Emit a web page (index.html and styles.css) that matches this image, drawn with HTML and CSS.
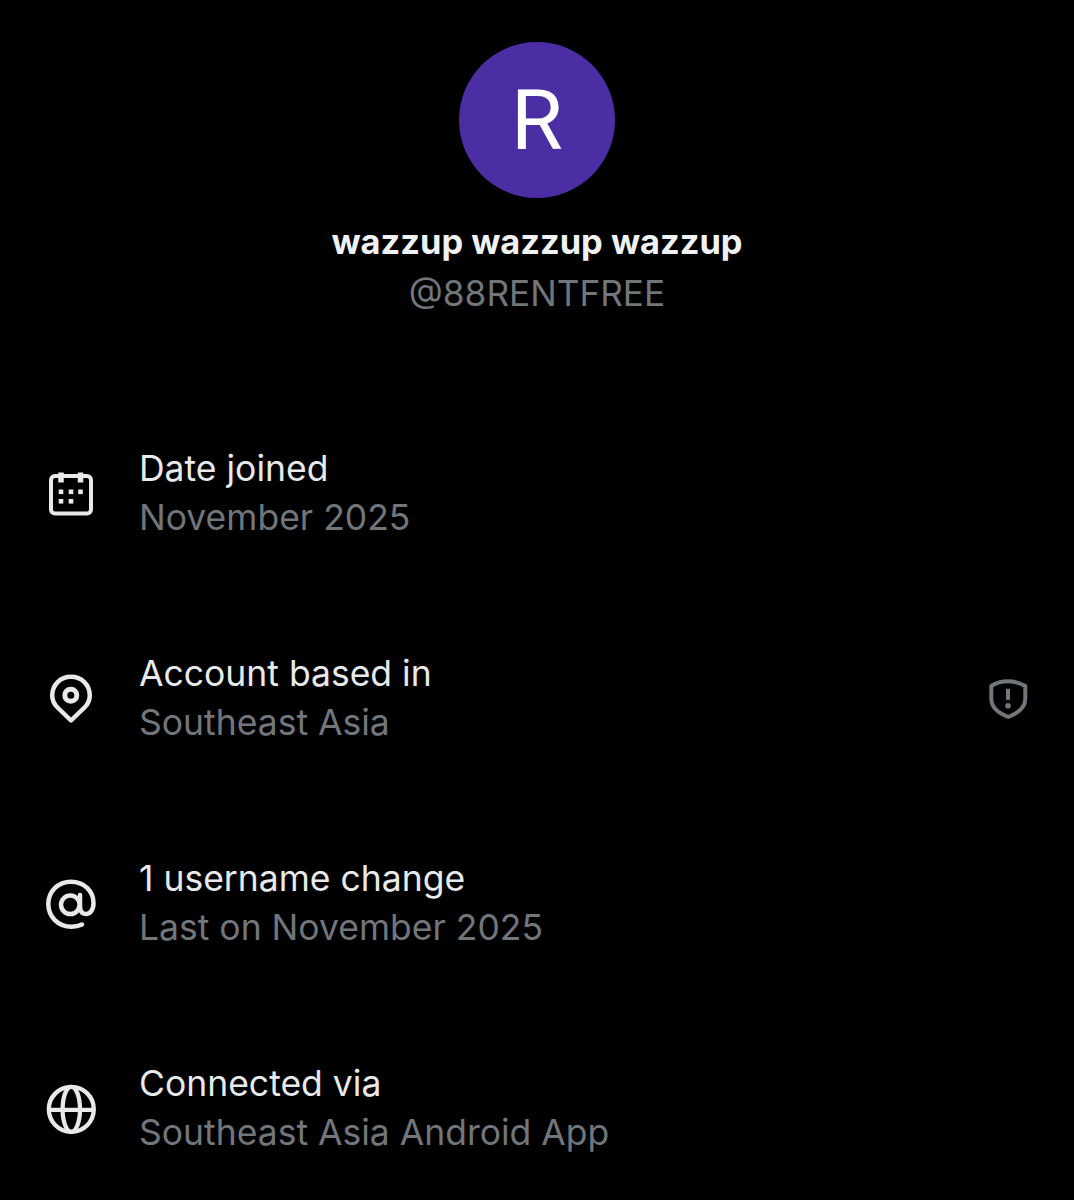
FILE: index.html
```html
<!DOCTYPE html>
<html lang="en">
<head>
<meta charset="utf-8">
<title>About this account</title>
<link rel="stylesheet" href="styles.css">
</head>
<body>
<main class="page">
  <header class="profile">
    <div class="avatar">R</div>
    <h1 class="name">wazzup wazzup wazzup</h1>
    <p class="handle">@88RENTFREE</p>
  </header>
  <ul class="rows">
    <li class="row">
      <svg class="icon" viewBox="0 0 50 50" fill="none" stroke="currentColor" stroke-width="4"><rect x="5" y="8" width="40" height="37.500" rx="4"/><path d="M15 4.500v10M34.500 4.500v10" stroke-width="5.500"/><g fill="currentColor" stroke="none"><rect x="12.700" y="21.500" width="4.600" height="4.600"/><rect x="22.700" y="21.500" width="4.600" height="4.600"/><rect x="32.200" y="21.500" width="4.600" height="4.600"/><rect x="12.700" y="31" width="4.600" height="4.600"/><rect x="22.700" y="31" width="4.600" height="4.600"/></g></svg>
      <div class="text"><div class="label">Date joined</div><div class="value">November 2025</div></div>
    </li>
    <li class="row">
      <svg class="icon" viewBox="0 0 50 50" fill="none" stroke="currentColor" stroke-width="4.500"><path d="M25 47.500L11.500 34.500C7.500 30.500 6.200 26.500 6.200 22.500C6.200 11.500 14.500 3.800 25 3.800C35.500 3.800 43.800 11.500 43.800 22.500C43.800 26.500 42.500 30.500 38.500 34.500Z" stroke-linejoin="round"/><circle cx="24.800" cy="22.200" r="6" stroke-width="5"/></svg>
      <div class="text"><div class="label">Account based in</div><div class="value">Southeast Asia</div></div>
      <svg class="shield" viewBox="0 0 40 40" fill="none" stroke="currentColor" stroke-width="4"><path d="M3.300 8C13 1.800 27 1.800 37.300 8V21C37.300 29.500 29 35.500 20.300 39C11.500 35.500 3.300 29.500 3.300 21Z" stroke-linejoin="round"/><path d="M20 10.800v11"/><circle cx="20" cy="27.800" r="2.800" fill="currentColor" stroke="none"/></svg>
    </li>
    <li class="row">
      <svg class="icon" viewBox="0 0 50 50" fill="none" stroke="currentColor" stroke-width="4.500" stroke-linecap="round"><path d="M36 46.500C33 48 29.500 48.700 25.500 48.700C12 48.700 2.300 38.500 2.300 26C2.300 13.500 12 3.700 25 3.700C38 3.700 47.500 13 47.500 25C47.500 32 44 36 40 36C36 36 34 33 34 28V17"/><ellipse cx="24.300" cy="26.800" rx="9.300" ry="9.300"/></svg>
      <div class="text"><div class="label">1 username change</div><div class="value">Last on November 2025</div></div>
    </li>
    <li class="row">
      <svg class="icon" viewBox="0 0 50 50" fill="none" stroke="currentColor" stroke-width="4.300"><circle cx="25.300" cy="26.300" r="22.500"/><ellipse cx="25.300" cy="26.300" rx="8.700" ry="22.500"/><path d="M3 26.800h44"/></svg>
      <div class="text"><div class="label">Connected via</div><div class="value">Southeast Asia Android App</div></div>
    </li>
  </ul>
</main>
</body>
</html>
```
FILE: styles.css
```css
* { box-sizing: border-box; }
html, body { margin: 0; background: #000; }
body { font-family: Inter, "Liberation Sans", sans-serif; color: #e7e9ea; }
.page { height: 1200px; overflow: hidden; padding-top: 42px; }
.profile { display: flex; flex-direction: column; align-items: center; }
.avatar {
  width: 156px; height: 156px; border-radius: 50%;
  background: #4b2ea3; color: #fff; padding-top: 2px;
  display: flex; align-items: center; justify-content: center;
  font-family: Roboto, "Liberation Sans", sans-serif; font-size: 84px; line-height: 1;
}
.name { margin: 23px 0 0; font-size: 34.400px; line-height: 42px; font-weight: 700; color: #eff1f2; }
.handle { margin: 9px 0 0; font-size: 35.200px; line-height: 42px; color: #71767b; }
.rows { list-style: none; margin: 119px 0 0; padding: 0 46px; display: flex; flex-direction: column; gap: 86px; }
.row { display: flex; align-items: center; height: 119px; color: #e7e9ea; }
.icon { width: 50px; height: 50px; flex: none; margin-right: 44px; overflow: visible; }
.text { flex: 1; margin-left: -1px; }
.label { font-size: 35.500px; line-height: 49px; color: #e7e9ea; }
.value { font-size: 35.500px; line-height: 49px; color: #71767b; }
.shield { width: 40px; height: 40px; flex: none; color: #71767b; overflow: visible; }
```
